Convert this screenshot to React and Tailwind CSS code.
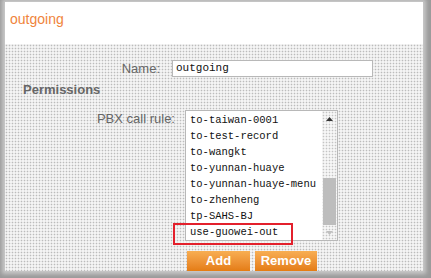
const rules = [
  "to-taiwan-0001",
  "to-test-record",
  "to-wangkt",
  "to-yunnan-huaye",
  "to-yunnan-huaye-menu",
  "to-zhenheng",
  "tp-SAHS-BJ",
  "use-guowei-out",
];

const sans = { fontFamily: '"Liberation Sans", Arial, sans-serif' };
const mono = { fontFamily: '"Liberation Mono", "Courier New", monospace' };

export default function App() {
  return (
    <div className="relative w-[431px] h-[278px] bg-[#9a9a9a] pl-[5px] pt-[2px] pr-[8px] pb-[7px]" style={sans}>
      <div className="h-full flex flex-col bg-white shadow-[0_0_4px_3px_#c9c9c9] overflow-hidden">
        {/* Header */}
        <div className="h-[48px] pl-[5px] pt-[9px] text-[14px] leading-[16px] text-[#f0843c]">
          outgoing
        </div>

        {/* Form */}
        <div className="flex-1 bg-[radial-gradient(circle,#bcbcbc_0.7px,#f4f4f4_1.1px)] bg-[length:3px_3px]">
          <div className="flex items-center mt-[15px]">
            <div className="w-[155px] text-right text-[13px] text-[#666]">Name:</div>
            <div
              className="ml-[12px] w-[201px] h-[17px] bg-white border border-[#b8b8b8] pl-[3px] text-[11px] leading-[15px] text-[#111]"
              style={mono}
            >
              outgoing
            </div>
          </div>

          <div className="mt-[4px] pl-[18px] text-[13px] leading-[16px] font-bold text-[#666]">
            Permissions
          </div>

          <div className="flex mt-[12px]">
            <div className="w-[170px] text-right text-[13px] leading-[16px] pt-[1px] text-[#666]">
              PBX call rule:
            </div>
            <div className="ml-[10px] w-[153px] h-[131px] flex bg-white border border-[#b8b8b8]">
              <div className="flex-1 pl-[4px] pt-[1px]" style={mono}>
                {rules.map((r) => (
                  <div key={r} className="h-[16px] leading-[16px] text-[10.5px] text-[#111] whitespace-nowrap">
                    {r}
                  </div>
                ))}
              </div>
              {/* Scrollbar */}
              <div className="w-[15px] flex flex-col bg-[radial-gradient(circle,#c4c4c4_0.7px,#f6f6f6_1.1px)] bg-[length:3px_3px]">
                <div className="h-[16px] flex items-center justify-center">
                  <svg width="7" height="4" viewBox="0 0 7 4">
                    <path d="M3.5 0 L7 4 L0 4 Z" fill="#333" />
                  </svg>
                </div>
                <div className="h-[51px]" />
                <div className="h-[47px] mx-[1px] bg-[#bdbdbd]" />
                <div className="flex-1 flex items-center justify-center">
                  <svg width="7" height="4" viewBox="0 0 7 4">
                    <path d="M0 0 L7 0 L3.5 4 Z" fill="#c0c0c0" />
                  </svg>
                </div>
              </div>
            </div>
          </div>

          <div className="flex gap-[5px] mt-[10px] pl-[182px]">
            <button className="w-[63px] h-[20px] bg-gradient-to-b from-[#f8ae52] to-[#e47c12] text-white text-[13px] font-bold leading-[20px]">
              Add
            </button>
            <button className="w-[62px] h-[20px] bg-gradient-to-b from-[#f8ae52] to-[#e47c12] text-white text-[13px] font-bold leading-[20px]">
              Remove
            </button>
          </div>
        </div>
      </div>

      {/* Highlight box */}
      <div className="absolute left-[173px] top-[223px] w-[120px] h-[22px] border-2 border-[#e3202c]" />
    </div>
  );
}
